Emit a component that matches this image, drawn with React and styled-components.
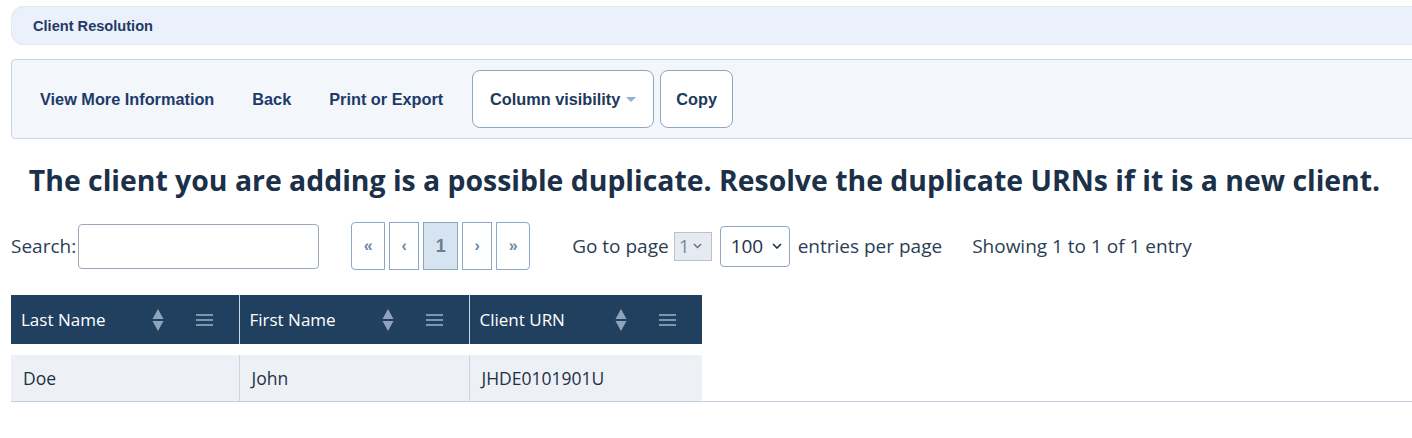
import React from 'react';
import styled, { createGlobalStyle } from 'styled-components';

const GlobalStyle = createGlobalStyle`
  body {
    margin: 0;
    background: #ffffff;
    overflow: hidden;
    font-family: "Open Sans", "Noto Sans", sans-serif;
    color: #1d3049;
  }
`;

const rows = [{ last: 'Doe', first: 'John', urn: 'JHDE0101901U' }];

const columns = [
  { label: 'Last Name', width: 228 },
  { label: 'First Name', width: 230 },
  { label: 'Client URN', width: 233 },
];

const SortIcon = () => (
  <svg width="12" height="24" viewBox="0 0 12 24">
    <path d="M6 1 L11.5 11 H0.5 Z" fill="#8ea3bd" />
    <path d="M6 23 L11.5 13 H0.5 Z" fill="#8ea3bd" />
  </svg>
);

const MenuIcon = () => (
  <svg width="17" height="14" viewBox="0 0 17 14">
    <rect x="0" y="1" width="17" height="2" fill="#7f94ad" />
    <rect x="0" y="6" width="17" height="2" fill="#7f94ad" />
    <rect x="0" y="11" width="17" height="2" fill="#7f94ad" />
  </svg>
);

const Chevron = ({ size = 10, color = '#1d3049' }) => (
  <svg width={size} height={size * 0.6} viewBox="0 0 10 6">
    <path d="M1 1 L5 5 L9 1" fill="none" stroke={color} strokeWidth="1.6" />
  </svg>
);

const App = () => {
  return (
    <Page>
      <GlobalStyle />
      <TitleBar>Client Resolution</TitleBar>

      <Toolbar>
        <ToolLink $gap={38}>View More Information</ToolLink>
        <ToolLink $gap={38}>Back</ToolLink>
        <ToolLink $gap={29}>Print or Export</ToolLink>
        <ToolButton $wide>
          Column visibility
          <Caret />
        </ToolButton>
        <ToolButton>Copy</ToolButton>
      </Toolbar>

      <Heading>
        The client you are adding is a possible duplicate. Resolve the duplicate URNs if it is a new client.
      </Heading>

      <Controls>
        <SearchLabel>
          Search:
          <SearchInput type="text" />
        </SearchLabel>

        <Pager>
          <PageButton $first>«</PageButton>
          <PageButton>‹</PageButton>
          <PageButton $active>1</PageButton>
          <PageButton>›</PageButton>
          <PageButton $last>»</PageButton>
        </Pager>

        <PageInfo>
          Go to page
          <SmallSelect>
            1<Chevron size={9} color="#5d7190" />
          </SmallSelect>
          <SizeSelect>
            100<Chevron size={10} />
          </SizeSelect>
          entries per page
        </PageInfo>

        <Summary>Showing 1 to 1 of 1 entry</Summary>
      </Controls>

      <TableWrap>
        <Table>
          <colgroup>
            {columns.map((c) => (
              <col key={c.label} style={{ width: c.width }} />
            ))}
          </colgroup>
          <thead>
            <tr>
              {columns.map((c) => (
                <HeadCell key={c.label}>
                  <HeadInner>
                    <span>{c.label}</span>
                    <HeadIcons>
                      <SortIcon />
                      <MenuIcon />
                    </HeadIcons>
                  </HeadInner>
                </HeadCell>
              ))}
            </tr>
          </thead>
          <tbody>
            <SpacerRow>
              <td colSpan={3} />
            </SpacerRow>
            {rows.map((r) => (
              <tr key={r.urn}>
                <Cell>{r.last}</Cell>
                <Cell>{r.first}</Cell>
                <Cell>{r.urn}</Cell>
              </tr>
            ))}
          </tbody>
        </Table>
      </TableWrap>
    </Page>
  );
};

export default App;

const Page = styled.div`
  padding: 6px 0 0 11px;
`;

const TitleBar = styled.div`
  height: 37px;
  margin-right: -20px;
  display: flex;
  align-items: center;
  padding-left: 21px;
  background: #eaf1fa;
  border: 1px solid #dfe8f3;
  border-radius: 12px 0 0 12px;
  font-family: "Liberation Sans", Arial, sans-serif;
  font-weight: bold;
  font-size: 14.6px;
  color: #1f3a68;
`;

const Toolbar = styled.div`
  margin-top: 14px;
  margin-right: -20px;
  height: 78px;
  display: flex;
  align-items: center;
  padding-left: 28px;
  background: #f3f6fb;
  border: 1px solid #c6d4e4;
  border-radius: 4px 0 0 4px;
`;

const ToolLink = styled.a`
  font-family: "Liberation Sans", Arial, sans-serif;
  font-weight: bold;
  font-size: 16.3px;
  color: #1d3a6b;
  margin-right: ${(p) => p.$gap}px;
  cursor: pointer;
`;

const ToolButton = styled.button`
  height: 58px;
  width: ${(p) => (p.$wide ? '182px' : '73px')};
  margin-right: 6px;
  display: flex;
  align-items: center;
  justify-content: center;
  gap: 6px;
  background: #ffffff;
  border: 1px solid #8fa6c3;
  border-radius: 8px;
  font-family: "Liberation Sans", Arial, sans-serif;
  font-weight: bold;
  font-size: 16.3px;
  color: #1d3a5c;
  padding: 0;
`;

const Caret = styled.span`
  width: 0;
  height: 0;
  border-left: 5px solid transparent;
  border-right: 5px solid transparent;
  border-top: 5px solid #8fb0d3;
  margin-top: 1px;
`;

const Heading = styled.h1`
  margin: 21px 0 0 -14px;
  text-align: center;
  font-size: 28.4px;
  font-weight: bold;
  color: #1b3049;
  line-height: 40px;
  white-space: nowrap;
`;

const Controls = styled.div`
  margin-top: 21px;
  height: 50px;
  display: flex;
  align-items: center;
  font-size: 19px;
  color: #2b3e55;
`;

const SearchLabel = styled.label`
  display: flex;
  align-items: center;
  gap: 2px;
`;

const SearchInput = styled.input`
  width: 241px;
  height: 45px;
  box-sizing: border-box;
  border: 1px solid #9aa9bb;
  border-radius: 4px;
  background: #ffffff;
`;

const Pager = styled.div`
  display: flex;
  gap: 4px;
  margin-left: 32px;
`;

const PageButton = styled.button`
  width: ${(p) => (p.$active ? '35px' : p.$first || p.$last ? '34px' : '30px')};
  height: 48px;
  padding: 0;
  background: ${(p) => (p.$active ? '#d6e3f1' : '#ffffff')};
  border: 1px solid #8ea6c3;
  border-radius: ${(p) => (p.$first ? '4px 0 0 4px' : p.$last ? '0 4px 4px 0' : '0')};
  font-family: "Liberation Sans", Arial, sans-serif;
  font-weight: bold;
  font-size: ${(p) => (p.$active ? '18px' : '16px')};
  color: ${(p) => (p.$active ? '#6a7d93' : '#6c87a8')};
`;

const PageInfo = styled.div`
  display: flex;
  align-items: center;
  margin-left: 42px;
`;

const SmallSelect = styled.span`
  display: flex;
  align-items: center;
  gap: 3px;
  margin-left: 5px;
  height: 29px;
  width: 38px;
  box-sizing: border-box;
  padding-left: 4px;
  background: #e7ebf1;
  border: 1px solid #b6c2d1;
  color: #7a8aa0;
`;

const SizeSelect = styled.span`
  display: flex;
  align-items: center;
  gap: 9px;
  margin: 0 8px;
  height: 41px;
  width: 70px;
  box-sizing: border-box;
  padding-left: 10px;
  background: #ffffff;
  border: 1px solid #8ea6c3;
  border-radius: 4px;
  color: #1d3049;
`;

const Summary = styled.div`
  margin-left: 30px;
`;

const TableWrap = styled.div`
  margin-top: 24px;
  border-bottom: 1px solid #c3d0df;
`;

const Table = styled.table`
  border-collapse: collapse;
  width: 691px;
  table-layout: fixed;
`;

const HeadCell = styled.th`
  height: 49px;
  padding: 0 0 0 10px;
  background: #21405f;
  color: #ffffff;
  font-weight: normal;
  font-size: 17px;
  text-align: left;
  border-left: 1px solid #c8d6e6;
  &:first-child {
    border-left: none;
  }
`;

const HeadInner = styled.div`
  display: flex;
  align-items: center;
  justify-content: space-between;
  padding-right: 26px;
`;

const HeadIcons = styled.span`
  display: flex;
  align-items: center;
  gap: 32px;
`;

const SpacerRow = styled.tr`
  height: 11px;
  td {
    padding: 0;
    background: #ffffff;
  }
`;

const Cell = styled.td`
  height: 46px;
  padding: 0 0 0 12px;
  background: #edf0f4;
  font-size: 17.5px;
  color: #1d3049;
  border-left: 1px solid #c9d5e3;
  &:first-child {
    border-left: none;
  }
`;
